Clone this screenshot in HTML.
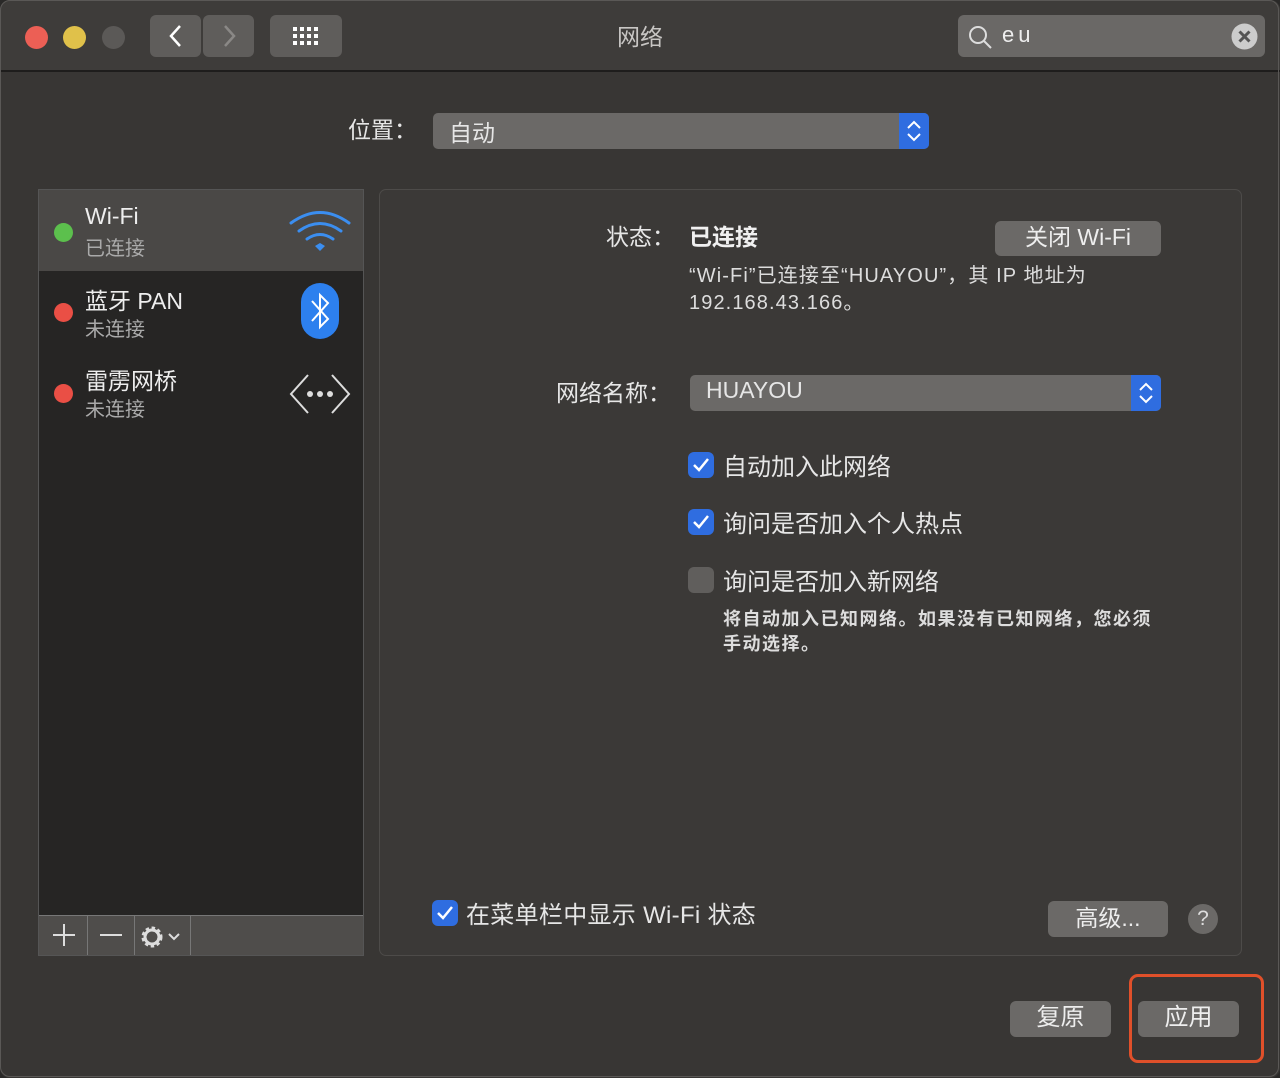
<!DOCTYPE html><html><head><meta charset="utf-8"><style>
*{margin:0;padding:0;box-sizing:border-box}
body{width:1280px;height:1078px;background:#2a2928;font-family:"Liberation Sans","Noto Sans CJK SC",sans-serif;color:#e6e6e6;position:relative;overflow:hidden}
.win{position:absolute;left:0;top:0;width:1280px;height:1078px;background:#383634;border-radius:10px;overflow:hidden}
.edge{position:absolute;left:0;top:0;width:1279px;height:1077px;border:1px solid #5a5856;border-radius:10px;pointer-events:none}
.tb{position:absolute;left:0;top:0;width:100%;height:72px;background:#3e3c3a;border-bottom:2px solid #1e1d1c}
.a{position:absolute}
.dot{position:absolute;width:23px;height:23px;border-radius:50%}
.btn{position:absolute;background:#6b6967;border-radius:6px;color:#eee;text-align:center}
.cb{position:absolute;width:26px;height:26px;border-radius:6px;background:#2f6de0;left:688px}
.cb svg{position:absolute;left:4px;top:5px}
.t{position:absolute;white-space:nowrap}
</style></head><body><div class="win">
<div class="tb">
<div class="dot" style="left:25px;top:26px;background:#ec5f55"></div>
<div class="dot" style="left:63px;top:26px;background:#e0c14a"></div>
<div class="dot" style="left:102px;top:26px;background:#5b5957"></div>
<div class="btn" style="left:150px;top:15px;width:51px;height:42px;background:#5f5d5b"><svg width="51" height="42"><path d="M30 11 L21 21 L30 31" stroke="#fff" stroke-width="2.5" fill="none"/></svg></div>
<div class="btn" style="left:203px;top:15px;width:51px;height:42px;background:#5f5d5b"><svg width="51" height="42"><path d="M22 11 L31 21 L22 31" stroke="#8a8886" stroke-width="2.5" fill="none"/></svg></div>
<div class="btn" style="left:270px;top:15px;width:72px;height:42px;background:#5f5d5b"><svg width="72" height="42"><g fill="#fff"><rect x="23" y="12" width="4" height="4"/><rect x="30" y="12" width="4" height="4"/><rect x="37" y="12" width="4" height="4"/><rect x="44" y="12" width="4" height="4"/><rect x="23" y="19" width="4" height="4"/><rect x="30" y="19" width="4" height="4"/><rect x="37" y="19" width="4" height="4"/><rect x="44" y="19" width="4" height="4"/><rect x="23" y="26" width="4" height="4"/><rect x="30" y="26" width="4" height="4"/><rect x="37" y="26" width="4" height="4"/><rect x="44" y="26" width="4" height="4"/></g></svg></div>
<div class="t" style="left:0;width:1280px;text-align:center;top:18px;font-size:23px;color:#c8c6c4">网络</div>
<div class="a" style="left:958px;top:15px;width:307px;height:42px;background:#6a6866;border-radius:6px">
<svg class="a" style="left:8px;top:8px" width="30" height="30"><circle cx="12" cy="12" r="8" stroke="#ddd" stroke-width="2" fill="none"/><path d="M18 18 L25 25" stroke="#ddd" stroke-width="2"/></svg>
<div class="t" style="left:44px;top:7px;font-size:22px;letter-spacing:4px;color:#eee">eu</div>
<svg class="a" style="left:273px;top:8px" width="27" height="27"><circle cx="13.5" cy="13.5" r="13" fill="#ccc"/><path d="M8.5 8.5 L18.5 18.5 M18.5 8.5 L8.5 18.5" stroke="#555" stroke-width="3"/></svg>
</div>
</div>
<div class="t" style="left:348px;top:111px;font-size:23px">位置：</div>
<div class="a" style="left:433px;top:113px;width:496px;height:36px;background:#6b6967;border-radius:5px"><div class="t" style="left:16px;top:1px;font-size:23px">自动</div><div class="a" style="right:0;top:0;width:30px;height:36px;background:#2f6de0;border-radius:0 5px 5px 0"><svg width="30" height="36"><path d="M9 15 L15 9 L21 15 M9 21 L15 27 L21 21" stroke="#fff" stroke-width="2" fill="none"/></svg></div></div>
<div class="a" style="left:38px;top:189px;width:326px;height:767px;background:#262524;border:1px solid #555"></div>
<div class="a" style="left:39px;top:190px;width:324px;height:81px;background:#4a4846"></div>
<div class="dot" style="left:54px;top:223px;width:19px;height:19px;background:#5cc04d"></div>
<div class="dot" style="left:54px;top:303px;width:19px;height:19px;background:#ea4f45"></div>
<div class="dot" style="left:54px;top:384px;width:19px;height:19px;background:#ea4f45"></div>
<div class="t" style="left:85px;top:203px;font-size:23px;color:#eee">Wi-Fi</div>
<div class="t" style="left:85px;top:232px;font-size:20px;color:#aaa">已连接</div>
<div class="t" style="left:85px;top:282px;font-size:23px;color:#eee">蓝牙 PAN</div>
<div class="t" style="left:85px;top:313px;font-size:20px;color:#aaa">未连接</div>
<div class="t" style="left:85px;top:362px;font-size:23px;color:#eee">雷雳网桥</div>
<div class="t" style="left:85px;top:393px;font-size:20px;color:#aaa">未连接</div>
<svg class="a" style="left:288px;top:208px" width="64" height="50"><g stroke="#3b8ef0" stroke-width="3" fill="none" stroke-linecap="round"><path d="M3 15 Q32 -6 61 15"/><path d="M11 23 Q32 8 53 23"/><path d="M19 31 Q32 22 45 31"/></g><path d="M27 38 L32 35 L37 38 L32 43 Z" fill="#3b8ef0"/></svg>
<svg class="a" style="left:300px;top:282px" width="40" height="58"><rect x="1" y="1" width="38" height="56" rx="19" fill="#2d80ee"/><path d="M12 19 L28 37 L20 45 L20 13 L28 21 L12 39" stroke="#fff" stroke-width="2" fill="none"/></svg>
<svg class="a" style="left:288px;top:372px" width="64" height="44"><g stroke="#ddd" stroke-width="2" fill="none"><path d="M20 3 L3 22 L20 41"/><path d="M44 3 L61 22 L44 41"/></g><g fill="#ddd"><circle cx="22" cy="22" r="3"/><circle cx="32" cy="22" r="3"/><circle cx="42" cy="22" r="3"/></g></svg>
<div class="a" style="left:39px;top:915px;width:324px;height:40px;background:#4f4d4b;border-top:1px solid #777"></div>
<div class="a" style="left:87px;top:915px;width:1px;height:40px;background:#777"></div>
<div class="a" style="left:134px;top:915px;width:1px;height:40px;background:#777"></div>
<div class="a" style="left:190px;top:915px;width:1px;height:40px;background:#777"></div>
<div class="a" style="left:53px;top:934px;width:22px;height:2px;background:#ddd"></div>
<div class="a" style="left:63px;top:924px;width:2px;height:22px;background:#ddd"></div>
<div class="a" style="left:100px;top:934px;width:22px;height:2px;background:#ddd"></div>
<svg class="a" style="left:139px;top:924px" width="46" height="26"><circle cx="13" cy="13" r="8" fill="none" stroke="#ddd" stroke-width="5" stroke-dasharray="3 2.3"/><circle cx="13" cy="13" r="7" fill="none" stroke="#ddd" stroke-width="3"/><path d="M30 10 L35 15 L40 10" stroke="#ddd" stroke-width="2" fill="none"/></svg>
<div class="a" style="left:379px;top:189px;width:863px;height:767px;background:#3b3937;border:1px solid #4d4b49;border-radius:7px"></div>
<div class="t" style="left:606px;top:218px;font-size:23px">状态：</div>
<div class="t" style="left:689px;top:218px;font-size:23px;color:#f0f0f0;font-weight:bold">已连接</div>
<div class="btn" style="left:995px;top:221px;width:166px;height:35px;font-size:23px;line-height:33px">关闭 Wi-Fi</div>
<div class="t" style="left:689px;top:263px;font-size:20px;line-height:27px;color:#ddd;letter-spacing:1.1px">“Wi-Fi”已连接至“HUAYOU”，其 IP 地址为<br>192.168.43.166。</div>
<div class="t" style="left:556px;top:374px;font-size:23px">网络名称：</div>
<div class="a" style="left:690px;top:375px;width:471px;height:36px;background:#6b6967;border-radius:5px"><div class="t" style="left:16px;top:2px;font-size:23px">HUAYOU</div><div class="a" style="right:0;top:0;width:30px;height:36px;background:#2f6de0;border-radius:0 5px 5px 0"><svg width="30" height="36"><path d="M9 15 L15 9 L21 15 M9 21 L15 27 L21 21" stroke="#fff" stroke-width="2" fill="none"/></svg></div></div>
<div class="cb" style="top:452px"><svg width="18" height="16"><path d="M2 8 L7 13 L16 2" stroke="#fff" stroke-width="2.5" fill="none"/></svg></div>
<div class="t" style="left:723px;top:447px;font-size:24px">自动加入此网络</div>
<div class="cb" style="top:509px"><svg width="18" height="16"><path d="M2 8 L7 13 L16 2" stroke="#fff" stroke-width="2.5" fill="none"/></svg></div>
<div class="t" style="left:723px;top:504px;font-size:24px">询问是否加入个人热点</div>
<div class="cb" style="top:567px;background:#605e5c"></div>
<div class="t" style="left:723px;top:562px;font-size:24px">询问是否加入新网络</div>
<div class="t" style="left:723px;top:607px;font-size:18px;line-height:25px;color:#ddd;font-weight:bold;letter-spacing:1.5px">将自动加入已知网络。如果没有已知网络，您必须<br>手动选择。</div>
<div class="cb" style="left:432px;top:900px"><svg width="18" height="16"><path d="M2 8 L7 13 L16 2" stroke="#fff" stroke-width="2.5" fill="none"/></svg></div>
<div class="t" style="left:466px;top:895px;font-size:24px;letter-spacing:0.3px">在菜单栏中显示 Wi-Fi 状态</div>
<div class="btn" style="left:1048px;top:901px;width:120px;height:36px;font-size:23px;line-height:34px">高级...</div>
<div class="a" style="left:1188px;top:904px;width:30px;height:30px;border-radius:50%;background:#6b6967;text-align:center;font-size:21px;line-height:30px;color:#ddd">?</div>
<div class="btn" style="left:1010px;top:1001px;width:101px;height:36px;font-size:24px;line-height:34px">复原</div>
<div class="btn" style="left:1138px;top:1001px;width:101px;height:36px;font-size:24px;line-height:34px">应用</div>
<div class="a" style="left:1129px;top:974px;width:135px;height:89px;border:3px solid #e0502a;border-radius:9px"></div>
</div><div class="edge"></div></body></html>
